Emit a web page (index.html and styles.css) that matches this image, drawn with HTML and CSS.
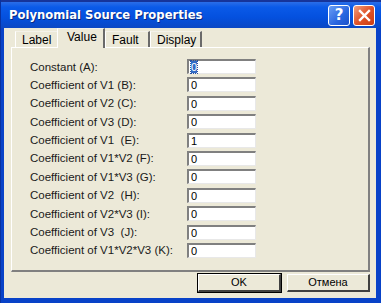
FILE: index.html
```html
<!DOCTYPE html>
<html lang="en">

<head>
    <meta charset="UTF-8">
    <title>Polynomial Source Properties</title>
    <link rel="stylesheet" href="styles.css">
</head>

<body>
    <div class="window">
        <div class="titlebar">
            <span class="title">Polynomial Source Properties</span>
            <div class="title-btns">
                <span class="tbtn help">?</span>
                <span class="tbtn close">
                    <svg width="13" height="13" viewBox="0 0 13 13">
                        <path d="M2 2 L11 11 M11 2 L2 11" stroke="#fff" stroke-width="2.4" stroke-linecap="square"/>
                    </svg>
                </span>
            </div>
        </div>
        <div class="body">
            <div class="tabs">
                <span class="tab tab-label">Label</span>
                <span class="tab tab-value active">Value</span>
                <span class="tab tab-fault">Fault</span>
                <span class="tab tab-display">Display</span>
            </div>
            <div class="panel">
                <div class="rows">
                    <label>Constant (A):</label><div class="field"><span class="sel">0</span></div>
                    <label>Coefficient of V1 (B):</label><div class="field">0</div>
                    <label>Coefficient of V2 (C):</label><div class="field">0</div>
                    <label>Coefficient of V3 (D):</label><div class="field">0</div>
                    <label>Coefficient of V1&nbsp;&nbsp;(E):</label><div class="field">1</div>
                    <label>Coefficient of V1*V2 (F):</label><div class="field">0</div>
                    <label>Coefficient of V1*V3 (G):</label><div class="field">0</div>
                    <label>Coefficient of V2&nbsp;&nbsp;(H):</label><div class="field">0</div>
                    <label>Coefficient of V2*V3 (I):</label><div class="field">0</div>
                    <label>Coefficient of V3&nbsp;&nbsp;(J):</label><div class="field">0</div>
                    <label>Coefficient of V1*V2*V3 (K):</label><div class="field">0</div>
                </div>
            </div>
            <div class="buttons">
                <span class="btn ok">OK</span>
                <span class="btn">Отмена</span>
            </div>
        </div>
    </div>
</body>

</html>
```

FILE: styles.css
```css
html, body {
    margin: 0;
    padding: 0;
}

body {
    width: 381px;
    height: 303px;
    overflow: hidden;
    font-family: "Liberation Sans", Arial, sans-serif;
    font-size: 11px;
    color: #000000;
}

.window {
    height: 303px;
    box-sizing: border-box;
    background: #0842c8;
    padding: 0 5px 5px 3px;
    display: flex;
    flex-direction: column;
    border-left: 1px solid #0831a0;
}

.titlebar {
    height: 26px;
    margin: 0 -5px 0 -3px;
    padding: 0 6px 0 8px;
    display: flex;
    align-items: center;
    justify-content: space-between;
    background: linear-gradient(#2b6ee8 0%, #0a5ae8 20%, #0450de 60%, #0a47c4 100%);
    border-top: 2px solid #16349a;
}

.title {
    color: #ffffff;
    font-family: "DejaVu Sans", Verdana, sans-serif;
    font-weight: bold;
    font-size: 11.6px;
    text-shadow: 1px 1px 0 #0a2a80;
}

.title-btns {
    display: flex;
    gap: 3px;
}

.tbtn {
    width: 20px;
    height: 19px;
    border: 1px solid #ffffff;
    border-radius: 3px;
    display: flex;
    align-items: center;
    justify-content: center;
    color: #ffffff;
    font-weight: bold;
    font-size: 15px;
    font-family: "DejaVu Sans", sans-serif;
}

.help {
    background: linear-gradient(135deg, #6a9ff5, #2a66e0 60%, #1d52c9);
}

.close {
    background: linear-gradient(135deg, #f0a080, #e0542a 50%, #c93c12);
}

.body {
    flex: 1;
    background: #ece9d8;
    padding: 0 6px 0 7px;
    display: flex;
    flex-direction: column;
}

.tabs {
    display: flex;
    align-items: flex-end;
    height: 19px;
    padding-left: 4px;
}

.tab {
    height: 16px;
    line-height: 17px;
    box-sizing: border-box;
    padding-left: 6px;
    font-size: 12px;
    border-top: 1px solid #f4f2ea;
    border-left: 1px solid #ffffff;
    border-right: 2px solid #6a6a6a;
    color: #000;
}

.tab-label {
    width: 42px;
    border-right: none;
}

.tab-value {
    width: 48px;
}

.tab-fault {
    width: 45px;
}

.tab-display {
    width: 52px;
}

.tab.active {
    height: 20px;
    line-height: 17px;
    padding-left: 9px;
    background: #ece9d8;
    margin-bottom: -1px;
    position: relative;
    z-index: 1;
}

.panel {
    height: 225px;
    box-sizing: border-box;
    border-top: 1px solid #ffffff;
    border-left: 1px solid #ffffff;
    border-right: 2px solid #808080;
    border-bottom: 2px solid #808080;
    padding: 11px 0 0 18px;
}

.rows {
    display: grid;
    grid-template-columns: 157px 69px;
    grid-auto-rows: 15px;
    row-gap: 3.4px;
    align-items: center;
}

.rows label {
    white-space: nowrap;
    color: #1a1a1a;
    font-size: 11.5px;
}

.field {
    height: 15px;
    box-sizing: border-box;
    background: #ffffff;
    border-top: 2px solid #808080;
    border-left: 2px solid #808080;
    border-bottom: 1px solid #e8e8e8;
    border-right: 1px solid #e8e8e8;
    padding-left: 2px;
    line-height: 12px;
    font-size: 11px;
}

.sel {
    background: #316ac5;
    color: #ffffff;
    outline: 1px dotted #2a50a0;
}

.buttons {
    display: flex;
    justify-content: flex-end;
    gap: 6px;
    padding: 2px 0 0 0;
}

.btn {
    width: 80px;
    height: 15px;
    line-height: 15px;
    text-align: center;
    background: #ece9d8;
    border-top: 1px solid #ffffff;
    border-left: 1px solid #ffffff;
    border-right: 2px solid #404040;
    border-bottom: 2px solid #404040;
}

.ok {
    outline: 1px solid #000000;
}
```
